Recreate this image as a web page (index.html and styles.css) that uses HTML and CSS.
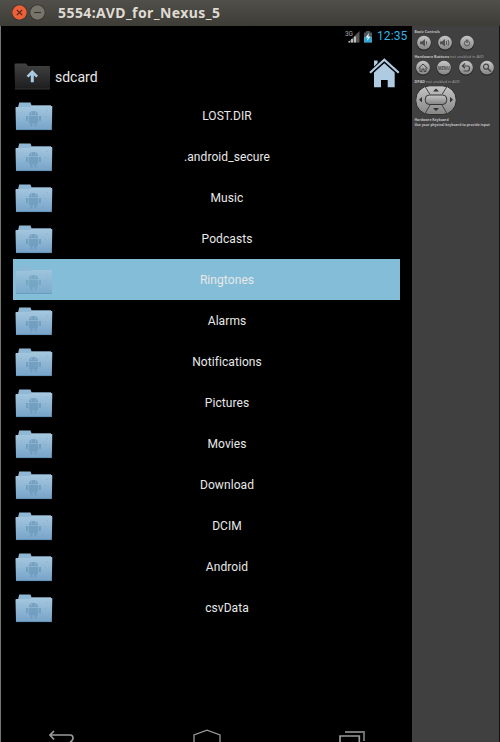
FILE: index.html
```
<!DOCTYPE html>
<html lang="en">
<head>
<meta charset="utf-8">
<title>5554:AVD_for_Nexus_5</title>
<link rel="stylesheet" href="styles.css">
</head>
<body>
<svg class="defs" width="0" height="0">
  <defs>
    <linearGradient id="blue" x1="0" y1="0" x2="0" y2="1"><stop offset="0" stop-color="#a6c8df"/><stop offset="1" stop-color="#76a3c8"/></linearGradient>
    <linearGradient id="dark" x1="0" y1="0" x2="0" y2="1"><stop offset="0" stop-color="#424242"/><stop offset="1" stop-color="#1d1d1d"/></linearGradient>
    <linearGradient id="metal" x1="0" y1="0" x2="0" y2="1"><stop offset="0" stop-color="#c6c6c6"/><stop offset="1" stop-color="#858585"/></linearGradient>
    <symbol id="folder" viewBox="0 0 38 29">
      <path d="M3 5.5L4.2 .5H15.5L16.5 3.3H36V8H3Z" fill="#8fb8d4"/>
      <path d="M.5 5.8Q.5 5 1.3 5H15L17 4H36.8Q37.3 4 37.3 4.8L36.8 28H1Z" fill="url(#blue)"/>
      <path d="M1 27.6H36.8" stroke="#5d8db3" stroke-width=".8"/>
      <g fill="#6b98ba" opacity=".75">
        <path d="M14 13Q14 9 18.5 9Q23 9 23 13ZM14 13.8H23V20.5Q23 21.3 22.2 21.3H21.6V24.5H19.6V21.3H17.4V24.5H15.4V21.3H14.8Q14 21.3 14 20.5ZM11 14H13.2V19H11ZM23.8 14H26V19H23.8Z"/>
      </g>
      <path d="M16 11.2H17M20 11.2H21" stroke="#9dc0d9"/>
      <g fill="#699bc1" opacity=".4"><path d="M6 10h1v1H6zM30 14h1v1h-1zM7 20h1v1H7zM28 23h1v1h-1zM32 8h1v1h-1z"/></g>
    </symbol>
    <symbol id="knob" viewBox="0 0 16 16"><circle cx="8" cy="8.3" r="7.4" fill="#292929"/><circle cx="8" cy="7.7" r="6.9" fill="url(#metal)"/></symbol>
  </defs>
</svg>
<div class="window">
  <header class="titlebar">
    <svg width="46" height="26" viewBox="0 0 46 26">
      <circle cx="7.5" cy="12.5" r="8" fill="#37352f"/><circle cx="7.5" cy="12.5" r="7.2" fill="#ec6038"/><path d="M4.8 9.8L10.2 15.2M10.2 9.8L4.8 15.2" stroke="#4b2218" stroke-width="1.1"/>
      <circle cx="25.5" cy="12.5" r="8" fill="#37352f"/><circle cx="25.5" cy="12.5" r="7.2" fill="#77746b"/><path d="M22 12.5H29" stroke="#34332d" stroke-width="1.1"/>
    </svg>
    <h1>5554:AVD_for_Nexus_5</h1>
  </header>
  <div class="body">
    <main class="phone">
      <div class="status">
        <svg width="29" height="15" viewBox="0 0 29 15">
          <text x="0" y="7" font-size="7" fill="#aaa" font-family="Roboto" textLength="8" lengthAdjust="spacingAndGlyphs">3G</text>
          <path d="M14.5 2V13.5H3Z" fill="#555"/><path d="M3.5 13.5V12H5V13.5ZM6 13.5V10H8V13.5ZM9 13.5V7.5H11V13.5Z" fill="#bbb"/>
          <path d="M19 3.5H21V2H25V3.5H27V13.5H19Z" fill="#4d5b60"/><path d="M19 8H27V13.5H19Z" fill="#33a5ce"/><path d="M24 4L20.5 8.5H22.7L22 12L25.7 7.5H23.4Z" fill="#e5f7fc"/>
        </svg>
        <span class="clock">12:35</span>
      </div>
      <div class="path">
        <svg width="37" height="28" viewBox="0 0 37 28">
          <path d="M.5 1.5Q.5.5 1.5.5H12L14 3H35.3Q36 3 36 4V26H1Z" fill="url(#dark)"/><path d="M1 26H36" stroke="#343434"/>
          <path d="M18.3 7L24 12.8 22.2 14.5 19.8 12.3V19.3H16.8V12.3L14.4 14.5 12.6 12.8Z" fill="#a9cae3"/>
        </svg>
        <span class="dir">sdcard</span>
        <svg class="home" width="31" height="30" viewBox="0 0 31 30">
          <g fill="#aecbe2"><path d="M5 2.5H8.6V5L5 8.4ZM15.3 .2L30.5 14 29 15.6 15.3 3.3 1.7 15.6.3 14Z"/><path d="M15.3 5.2L25.7 14.5V29.3H18.7V22H12V29.3H5V14.5Z"/></g>
        </svg>
      </div>
      <ul class="files">
        <li><svg><use href="#folder"/></svg><span>LOST.DIR</span></li>
        <li><svg><use href="#folder"/></svg><span>.android_secure</span></li>
        <li><svg><use href="#folder"/></svg><span>Music</span></li>
        <li><svg><use href="#folder"/></svg><span>Podcasts</span></li>
        <li class="selected"><svg><use href="#folder"/></svg><span>Ringtones</span></li>
        <li><svg><use href="#folder"/></svg><span>Alarms</span></li>
        <li><svg><use href="#folder"/></svg><span>Notifications</span></li>
        <li><svg><use href="#folder"/></svg><span>Pictures</span></li>
        <li><svg><use href="#folder"/></svg><span>Movies</span></li>
        <li><svg><use href="#folder"/></svg><span>Download</span></li>
        <li><svg><use href="#folder"/></svg><span>DCIM</span></li>
        <li><svg><use href="#folder"/></svg><span>Android</span></li>
        <li><svg><use href="#folder"/></svg><span>csvData</span></li>
      </ul>
      <nav class="navbar">
        <svg width="26" height="13" viewBox="0 0 26 13"><path d="M5 2L1 6 5 10.5M1 6H21Q24 6 24 9T21 13" fill="none" stroke="#999" stroke-width="1.7"/></svg>
        <svg width="28" height="13" viewBox="0 0 28 13"><path d="M1 14V6L14 1.2 27 6V14" fill="none" stroke="#999" stroke-width="1.3"/></svg>
        <svg width="27" height="13" viewBox="0 0 27 13"><path d="M6 3H25V12" fill="none" stroke="#777" stroke-width="1.8"/><path d="M1 14V7H20.3V14" fill="none" stroke="#999" stroke-width="1.7"/></svg>
      </nav>
    </main>
    <aside class="controls">
      <p><b>Basic Controls</b></p>
      <div class="keys basic">
        <svg viewBox="0 0 16 16"><use href="#knob"/><path d="M4 6.5H6L9 4V11.5L6 9.2H4Z" fill="#505050"/><path d="M10.5 6.3V9.5" stroke="#555"/></svg>
        <svg viewBox="0 0 16 16"><use href="#knob"/><path d="M3 6.5H5L8 4V11.5L5 9.2H3Z" fill="#505050"/><path d="M9.5 6V9.7M11 5Q12.8 7.8 11 10.6" fill="none" stroke="#555"/></svg>
        <svg viewBox="0 0 16 16"><use href="#knob"/><circle cx="8" cy="8.3" r="2.6" fill="none" stroke="#555"/><path d="M8 4.3V8" stroke="#444"/></svg>
      </div>
      <p class="hw"><b>Hardware Buttons</b> not enabled in AVD</p>
      <div class="keys hardware">
        <svg viewBox="0 0 16 16"><use href="#knob"/><path d="M3.5 8.2L8 4 12.5 8.2M5 7.5V11.5H7V9H9V11.5H11V7.5" fill="none" stroke="#464646"/></svg>
        <svg viewBox="0 0 16 16"><use href="#knob"/><text x="2" y="9.7" font-size="4.5" font-weight="bold" font-family="Open Sans" fill="#494949" textLength="12" lengthAdjust="spacingAndGlyphs">MENU</text></svg>
        <svg viewBox="0 0 16 16"><use href="#knob"/><path d="M7 3.5L4.3 6 7 8.3M4.5 6H9.5Q11.5 6 11.5 8.4T9.3 11H5.5" fill="none" stroke="#464646" stroke-width="1.2"/></svg>
        <svg viewBox="0 0 16 16"><use href="#knob"/><circle cx="7" cy="6.7" r="2.5" fill="none" stroke="#464646" stroke-width="1.2"/><path d="M9 8.7L12 11.8" stroke="#464646" stroke-width="1.6"/></svg>
      </div>
      <p class="dp"><b>DPAD</b> not enabled in AVD</p>
      <svg class="pad" width="42" height="30" viewBox="0 0 42 30">
        <rect x=".8" y=".8" width="40.4" height="28.8" rx="14" fill="url(#metal)" stroke="#2d2d2d"/>
        <path d="M10 1.5L15 9.5M32 1.5L27 9.5M10 28.5L15 20M32 28.5L27 20" stroke="#454545"/>
        <rect x="10.3" y="10" width="21.4" height="9.5" rx="4" fill="url(#metal)" stroke="#353535"/>
        <path d="M21 3.5L24 6.5H18ZM21 26L24 23H18ZM4 14.7L7 12V17.5ZM38 14.7L35 12V17.5Z" fill="#333"/>
      </svg>
      <p class="kb"><b>Hardware Keyboard<br>Use your physical keyboard to provide input</b></p>
    </aside>
  </div>
</div>
</body>
</html>
```
FILE: styles.css
```
* { box-sizing: border-box; }
body { margin: 0; background: #000; overflow: hidden; font-family: Roboto, sans-serif; }
svg { display: block; flex: none; }
.defs { position: absolute; }
.window { width: 500px; height: 742px; overflow: hidden; display: flex; flex-direction: column; }
.titlebar { height: 26px; flex: none; display: flex; align-items: center; padding-left: 12px; background: linear-gradient(#504f49, #3d3c37); }
.titlebar h1 { margin: 0 0 1px; font: 700 14px/24px "Noto Sans", sans-serif; letter-spacing: .43px; color: #dfdbd2; white-space: nowrap; }
.body { flex: 1; display: flex; min-height: 0; border-left: 1px solid #77756f; border-right: 1px solid #111; }
.phone { width: 411px; flex: none; display: flex; flex-direction: column; background: #000; }
.status { height: 20px; display: flex; align-items: center; justify-content: flex-end; gap: 3px; padding-right: 4px; }
.clock { width: 31px; font-size: 12px; line-height: 20px; color: #33b5e5; white-space: nowrap; letter-spacing: .1px; }
.path { height: 49px; display: flex; align-items: flex-start; padding: 11px 12px 0 13px; }
.path > svg:first-child { margin-top: 6px; }
.path .home { margin-top: 1px; }
.dir { margin: 10px auto 0 4px; font-size: 14px; line-height: 20px; color: #e8e8e8; }
.files { list-style: none; margin: 0; padding: 0 12px; }
.files li { height: 41px; display: flex; align-items: center; padding-left: 2px; }
.files svg { width: 38px; height: 29px; margin-top: 1px; }
.files span { flex: 1; padding-left: 1px; margin-top: 1px; text-align: center; font-size: 12px; line-height: 16px; letter-spacing: .08px; color: #e8e8e8; }
.files .selected { background: #83bdd7; }
.selected svg { opacity: .75; }
.navbar { margin-top: auto; height: 13px; display: flex; justify-content: space-between; padding: 0 46px 0 48px; }
.controls { flex: 1; min-width: 0; background: #404040; padding: 3px 0 0 2px; }
.controls p { margin: 0; height: 5px; padding-left: .5px; font: 3.4px/5px "Open Sans", sans-serif; color: #aaa; white-space: nowrap; }
.controls b { color: #c4c4c4; }
.controls p:first-child { letter-spacing: .1px; }
.controls .hw, .controls .dp { font-size: 3.7px; letter-spacing: .04px; }
.keys { display: flex; }
.keys svg { width: 16px; height: 16px; }
.basic { gap: 5.3px; padding: 1px 0 0 2px; height: 20px; }
.hardware { gap: 5.3px; padding: 1px 0 0 1px; height: 20px; }
.pad { margin: 1px 0 1px 1px; }
.controls .kb { margin-top: 2px; height: 10px; letter-spacing: .01px; }
```
